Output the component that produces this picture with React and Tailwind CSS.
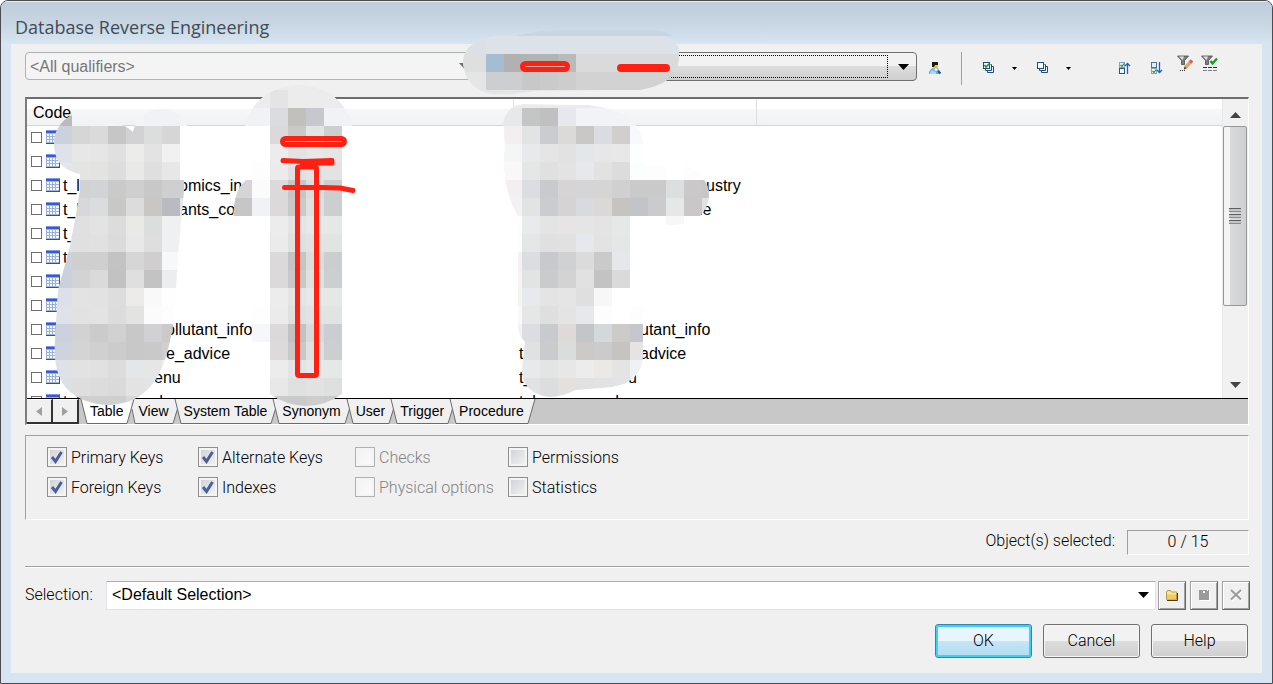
import { useState } from 'react';

// hidden part of each name keeps its width so the visible ends stay in place
const rows = [
  { id: 1 },
  { id: 2 },
  { id: 3, code: ['t_l', 'w-[116px]', 'omics_in'], name: ['', 'w-[187px]', 'ustry'] },
  { id: 4, code: ['t_l', 'w-[116px]', 'ants_co'], name: ['', 'w-[180px]', 'le'] },
  { id: 5, code: ['t_', 'w-[116px]', ''] },
  { id: 6, code: ['t', 'w-[116px]', ''] },
  { id: 7 },
  { id: 8 },
  { id: 9, code: ['', 'w-[103px]', 'ollutant_info'], name: ['', 'w-[121px]', 'utant_info'] },
  { id: 10, code: ['', 'w-[103px]', 'e_advice'], name: ['t', 'w-[121px]', 'advice'] },
  { id: 11, code: ['', 'w-[91px]', 'enu'], name: ['t_', 'w-[109px]', 'u'] },
  { id: 12, code: ['t_l', 'w-[91px]', 'd'], name: ['t_l', 'w-[91px]', 'd'] },
];

const tabs = ['Table', 'View', 'System Table', 'Synonym', 'User', 'Trigger', 'Procedure'];

const options = [
  { label: 'Primary Keys', checked: true },
  { label: 'Alternate Keys', checked: true },
  { label: 'Checks', disabled: true },
  { label: 'Permissions' },
  { label: 'Foreign Keys', checked: true },
  { label: 'Indexes', checked: true },
  { label: 'Physical options', disabled: true },
  { label: 'Statistics' },
];

const CELL = 18;

const mosaics = [
  {
    id: 'owner',
    x: 450,
    y: 36,
    fill: '#e4e5e5',
    path: 'M463 64C463 47 476 38 500 36C520 36 530 36 560 36H660Q676 38 679 50V60Q676 84 640 90L535 91Q510 96 490 94Q466 88 463 64Z',
    cells: [
      ['#dbe0e6', '#dbe0e6', ...Array(11).fill('#dde2e9')],
      ['#dfdfdf', '#dfdfdf', '#a6bcd0', '#b2b0b0', '#b0b4b5', '#b0b4b5', '#bababa', ...Array(6).fill('#dadada')],
      ['#e4e5e5', '#e4e5e5', '#cdcecf', '#cdcecf', '#c8c8c8', '#cacaca', '#cdcdcd', ...Array(6).fill('#d2d2d2')],
    ],
  },
  {
    id: 'code',
    x: 54,
    y: 108,
    fill: '#f3f4f6',
    path: 'M72 115C60 121 54 132 54 143C54 160 62 170 80 174L80 190L76 215L69 250L58 290L55 340C53 375 62 400 105 405C150 405 165 375 173 325L176 290L178 255L184 190V180H180V126H187Q180 109 160 109Q138 110 133 132Q125 124 112 123H72Z',
    cells: [
      ['#b9bbc0', '#f0f2f5', '#f2f3f5', '#f4f5f7', '#f4f5f7', '#f1f2f5', '#f1f2f5', '#f3f4f7'],
      ['#cdd1dc', '#d6d6d7', '#dadada', '#c6c6c7', '#d2d2d4', '#dcdddd', '#d6d6d6'],
      ['#dfe2ea', '#e7e7e8', '#e6e6e6', '#e0e0e1', '#ececeb', '#e3e3e3', '#f1f1f2'],
      ['#e2e5ec', '#e4e4e5', '#e3e3e2', '#dddddd', '#e9e9e8', '#dfdfdf', '#e7e7e7'],
      ['#d2d2d3', '#d2d2d3', '#d2d3d4', '#cacaca', '#cfcfcf', '#c8c8c9', '#cfcfcf', '#cfcfcf'],
      ['#d8d7d9', '#d8d7d9', '#dbdcde', '#c8c9c6', '#dcdcdc', '#c9c6c6', '#b9bbc1', '#e6e6e6'],
      ['#e0e0e0', '#e0e0e0', '#e2e3e2', '#dcdcdc', '#e9e9e8', '#dcdddd', '#eff0f0', '#eff0f0'],
      ['#dfe2e9', '#e0e0e0', '#e1e1e1', '#dbdbdc', '#e8e8e8', '#dedede', '#eff0f1', '#eff0f1'],
      ['#cbd1de', '#cfcfd0', '#cfcfd0', '#c3c3c4', '#d6d6d6', '#d0cece', '#f6f8fa'],
      ['#cbd0dd', '#d3d3d4', '#dadada', '#c2c2c3', '#dfdfdf', '#c3c3c3', '#ecedef'],
      ['#dde0ea', '#e3e3e3', '#e1e2e1', '#dddddd', '#ecebea', '#f9f9f9', '#fefefe'],
      ['#dfe2ea', '#e2e2e2', '#e3e3e4', '#dcdcdc', '#e3e3e2', '#fbfbfb', '#fdfdfd'],
      ['#cdd1dd', '#d2d2d2', '#cbcbcc', '#d1d1d1', '#c8c8c8', '#d1d1d4', '#cbcac9'],
      ['#cfd3de', '#d4d4d5', '#d0d0d1', '#cccccd', '#c8c8c8', '#cac9ca', '#cfcfd0'],
      ['#dee1e8', '#e2e2e3', '#e1e1e1', '#dcdcdd', '#e5e6e7', '#e6e6e6', '#eeeeee'],
      ['#dcdfe6', '#dededf', '#dcdcdc', '#dadada', '#e3e3e4', '#e3e4e4', '#eeeeee'],
      ['#cfcfd0', '#cfcfd0', '#cfcfd0', '#cfcfd0', '#d8d8d8', '#d8d8d8', '#d8d8d8'],
    ],
  },
  {
    id: 'kind',
    x: 234,
    y: 90,
    fill: '#ececec',
    path: 'M245 126Q254 92 290 86Q305 82 322 90Q346 100 352 126H342V394Q325 406 306 406Q285 405 270 394V342H252V216H233Q234 190 246 180H252V150H270V126Z',
    cells: [
      ['#ececec', '#ececec', '#e4e4e4', '#ececec', '#ececec', '#ececec', '#ececec'],
      ['#f0f2f5', '#f0f2f5', '#dadce0', '#c2c0bd', '#c6c8ce', '#f0f2f5', '#f0f2f5'],
      ['#ffffff', '#ffffff', '#dcd9da', '#c9c9c7', '#e2e5e4', '#cdcecf'],
      ['#ffffff', '#ffffff', '#ececec', '#e3e3e3', '#e6e7e6', '#e4e5e5'],
      ['#ffffff', '#fdfdfd', '#ebebeb', '#e0e0e0', '#e3e3e5', '#e2e3e2'],
      ['#d5d5d6', '#fbfbfc', '#dcd9da', '#c6c6c4', '#dcdede', '#cdcecf'],
      ['#c6c6c6', '#f0f2f5', '#dcd9da', '#c9c9c8', '#e0e2e1', '#cdcecf'],
      ['#ffffff', '#ffffff', '#ececec', '#e4e4e4', '#e7e9e8', '#e6e8e7'],
      ['#ffffff', '#ffffff', '#ebebeb', '#dfe0e0', '#e2e4e3', '#e2e4e3'],
      ['#ffffff', '#ffffff', '#dcd9da', '#c4c5c2', '#dcdddd', '#cccdcf'],
      ['#ffffff', '#ffffff', '#dcd9da', '#c8c8c7', '#e0e2e1', '#cdcecf'],
      ['#ffffff', '#ffffff', '#ececec', '#e4e4e4', '#e7e9e8', '#e6e8e7'],
      ['#ffffff', '#fefefe', '#ebebeb', '#dfe0e0', '#e2e4e3', '#e2e4e3'],
      ['#ffffff', '#f6f7fa', '#dcd9da', '#c2c2c0', '#d9dadb', '#cccdd0'],
      ['#ffffff', '#ffffff', '#dcdada', '#c8c8c7', '#e0e2e1', '#cdcecf'],
      ['#ffffff', '#ffffff', '#ececec', '#e4e4e4', '#e7e9e8', '#e6e8e7'],
      ['#ffffff', '#ffffff', '#e8e8e8', '#dfe0e0', '#e2e2e2', '#dedfdf'],
      ['#cbcbcb', '#cbcbcb', '#cbcbcb', '#cacaca', '#cdcdcd', '#cbcbcb'],
    ],
  },
  {
    id: 'name',
    x: 504,
    y: 108,
    fill: '#ebebec',
    path: 'M502 125Q508 104 524 104L590 105Q640 112 643 144V166H685Q709 176 709 195Q709 206 700 216H684V224L666 225V216H630V288L643 310V355Q642 382 612 387L575 390Q562 397 550 397Q523 394 522 370L525 342Q518 335 518 325V216Q503 190 504 156L505 150L504 126Z',
    cells: [
      ['#e7e8ea', '#c4c5c5', '#c0c0c1', '#e7e8ed', '#f1f3f6', '#f1f3f6', '#f1f3f6', '#f1f3f6'],
      ['#f2eff0', '#e1e4e3', '#cacccf', '#dcdad9', '#cac8c6', '#dadce1', '#d0cfce', '#f7f9fc'],
      ['#f4f5f5', '#e7e9eb', '#e5e5e5', '#e2e2e2', '#e4e7ea', '#e7e7e7', '#e8e8e8', '#fdfefe'],
      ['#f9f7f8', '#e5e7e6', '#e0e0e0', '#e3e3e3', '#e6e8ec', '#e2e2e3', '#dcdcdc', '#fcfdfd', '#fdfdfd', '#ffffff', '#fdfdfd', '#fdfdfd'],
      ['#f2eff1', '#dcdde0', '#c8cacd', '#d6d4d5', '#d5d5d7', '#d5d5d5', '#d0d0d0', '#cacaca', '#cacacb', '#dddee0', '#cac8c9', '#c8c6c7'],
      ['#f3f1f2', '#e1e4e3', '#cacccf', '#d6d3d5', '#d8dadd', '#dad9d7', '#c5c4c1', '#c3c4c7', '#cbcbcd', '#e5e8e7', '#cac7c8', '#e0e1e1'],
      ['#fdfdfd', '#e8eaec', '#e4e4e4', '#e6e4e5', '#e5e5e5', '#e4e4e4', '#e6e7e7', '#ffffff', '#ffffff', '#f7f7f7'],
      ['#fdfdfd', '#e5e7e6', '#e0e0e0', '#e1e1e1', '#e6e8eb', '#e3e3e3', '#e5e7e7'],
      ['#f4f1f3', '#dcdde0', '#c8c9cc', '#d0d1d3', '#dbdbdb', '#cacaca', '#e5e7ea'],
      ['#f6f3f4', '#e1e4e3', '#cacbcd', '#d3d3d4', '#e1e1e1', '#c3c3c3', '#dadada'],
      ['#f3f4f4', '#e7e9ec', '#e4e4e4', '#e5e5e5', '#dfdfdf', '#f7f7f7', '#ffffff', '#ffffff'],
      ['#fbf8f9', '#e5e7e6', '#dfdfdf', '#e4e4e4', '#e6e8ec', '#fdfdfd', '#ffffff', '#fdfdfd'],
      ['#f4f2f4', '#dcdde0', '#c8cacd', '#dedad9', '#c4c5c8', '#d5d8db', '#cccbc9', '#c6c7cc'],
      ['#f4f4f4', '#e0e2e1', '#cacbcd', '#dbdcdc', '#cccac8', '#cbcbcb', '#c5c4c2', '#e5e4e3'],
      ['#f4f4f4', '#e7e9eb', '#e3e4e4', '#e7e7e7', '#ececec', '#ebe9e6', '#e4e4e5', '#eff1f4'],
      ['#f4f4f4', '#e1e2e2', '#dcddde', '#e3e1df', '#e1e1e1', '#e0e2e4', '#e3e3e3', '#e9e9e9'],
      ['#dcdcdc', '#dcdcdc', '#dcdcdc', '#dcdcdc', '#dcdcdc'],
    ],
  },
];

const Redaction = () => (
  <svg width="1273" height="684" viewBox="0 0 1273 684" className="pointer-events-none absolute -top-px -left-px" aria-hidden="true">
    {mosaics.map((m) => (
      <g key={m.id}>
        <clipPath id={`clip-${m.id}`}>
          <path d={m.path} />
        </clipPath>
        <g clipPath={`url(#clip-${m.id})`}>
          <path d={m.path} fill={m.fill} />
          {m.cells.map((line, r) =>
            line.map((color, c) => (
              <rect
                key={`${r}-${c}`}
                x={m.x + c * CELL}
                y={m.y + r * CELL}
                width={CELL}
                height={CELL}
                fill={color}
                shapeRendering="crispEdges"
              />
            ))
          )}
        </g>
      </g>
    ))}
    <path d="M515 36Q535 31 560 30H655Q667 31 672 36Z" fill="#c8d5e3" />
    <g fill="none" stroke="#ff2012" strokeLinecap="round" strokeLinejoin="round">
      <rect x="522.5" y="63.5" width="45" height="6" rx="3" strokeWidth="5" />
      <path d="M621 68H666" strokeWidth="8" />
      <rect x="282.5" y="138.5" width="62" height="6" rx="3" strokeWidth="5" />
      <path d="M283 160.500L303 161.500L332 160.500" strokeWidth="5" />
      <path d="M302 163L332 163" strokeWidth="5" />
      <rect x="297.500" y="167" width="19" height="208.500" rx="1.500" strokeWidth="5" />
      <path d="M284.500 187.500H322L340 188L353 190.500" strokeWidth="5" />
    </g>
  </svg>
);

const Caret = ({ className }) => (
  <svg width="11" height="6" viewBox="0 0 11 6" className={className} aria-hidden="true">
    <path d="M0 0H11L5.500 6Z" fill="currentColor" />
  </svg>
);

const SmallCaret = () => (
  <svg width="5" height="3" viewBox="0 0 5 3" aria-hidden="true">
    <path d="M0 0H5L2.500 3Z" fill="#000" />
  </svg>
);

const UserIcon = () => (
  <svg width="14" height="14" viewBox="0 0 14 14" aria-hidden="true">
    <path d="M1 13V11L3 8L5 7H9L12 10V13Z" fill="#5eb4ea" />
    <path d="M2 12L4 9L8 11V13H2Z" fill="#a5dcf8" />
    <path d="M5 2H10V6L8 8H6L5 6Z" fill="#f6c52e" />
    <path d="M4 6V1H10V4H7L6 6Z" fill="#20160c" />
    <circle cx="8" cy="8.5" r="2" fill="#dceefa" stroke="#9aa9b6" />
    <path d="M10 10L12.500 12.500" stroke="#1c527c" strokeWidth="2" />
  </svg>
);

const StackIcon = ({ checked }) => (
  <svg width="12" height="12" viewBox="0 0 12 12" fill="none" stroke="#1f4e7c" strokeWidth="1" aria-hidden="true">
    <path d="M8.500 4.500H10.500V10.500H4.500V8.500" />
    <path d="M7.500 2.500H8.500V8.500H2.500V6.500" />
    <rect x="0.5" y="0.5" width="6" height="6" fill="#f7fafc" />
    {checked && <path d="M1.500 3L3 5L6.500 1.500" stroke="#159a25" strokeWidth="1.600" />}
  </svg>
);

const MoveIcon = ({ down }) => (
  <svg width="12" height="12" viewBox="0 0 12 12" fill="none" aria-hidden="true">
    <rect x="0.5" y="0.5" width="5" height="5" fill="#e3eef8" stroke={down ? '#4e7198' : '#8ea2b6'} />
    <rect x="0.5" y="6.5" width="5" height="5" fill="#f2f7fb" stroke={down ? '#8ea2b6' : '#285580'} />
    <path d={down ? 'M1.500 9L3 10.500L5 7.500' : 'M1.500 3L3 4.500L5 1.500'} stroke="#22a02a" strokeWidth="1.200" />
    <path d={down ? 'M8.500 0V10M6 8L8.500 10.500L11 8' : 'M8.500 12V2M6 4L8.500 1.500L11 4'} stroke="#1264e0" strokeWidth="1.300" />
  </svg>
);

const FilterIcon = ({ checked }) => (
  <svg width="17" height="17" viewBox="0 0 17 17" fill="none" aria-hidden="true">
    <path d="M0.500 1H11.500L7.500 5.500V9.500H4.500V5.500Z" fill="#7d7d7d" stroke="#4c4c4c" strokeWidth="0.800" />
    <path d="M2 1.500H7L5.500 5Z" fill="#e4e4e4" />
    {checked ? (
      <>
        <path d="M9.500 6L11.500 8.500L16 3.500" stroke="#12a11c" strokeWidth="2.400" />
        <path d="M2 12.500H16" stroke="#1d2f78" strokeWidth="1" strokeDasharray="4 1" />
        <path d="M2 15.500H16" stroke="#808080" strokeWidth="1" strokeDasharray="4 1" />
      </>
    ) : (
      <>
        <path d="M8.500 12.500L13.500 7" stroke="#d9a96a" strokeWidth="3.400" />
        <path d="M6.800 14.500L7.500 11.500L9.800 13.500Z" fill="#4a3520" />
        <path d="M13 7.500L15 5.300" stroke="#d8605a" strokeWidth="3.400" />
        <path d="M3 15.500H8" stroke="#333" strokeDasharray="1 1" />
      </>
    )}
  </svg>
);

const TableIcon = () => (
  <svg width="14" height="14" viewBox="0 0 14 14" shapeRendering="crispEdges" className="mb-[2px] shrink-0" aria-hidden="true">
    <rect width="14" height="14" fill="#9db2d6" />
    <rect width="14" height="3" fill="#3a5bd0" />
    <rect width="14" height="1" fill="#7f97e8" />
    <rect x="13" y="3" width="1" height="11" fill="#3b5480" />
    <rect y="13" width="14" height="1" fill="#3b5480" />
    {[1, 4, 7, 10].map((x) => [4, 7, 10].map((y) => <rect key={`${x}-${y}`} x={x} y={y} width={x === 10 ? 3 : 2} height="2" fill="#f2f7ff" />))}
  </svg>
);

const FolderIcon = () => (
  <svg width="12" height="11" viewBox="0 0 12 11" aria-hidden="true">
    <path d="M0.500 9.500V2L1.500 0.500H4.500L5.500 2H10.500V9.500Z" fill="#f8e49a" stroke="#b59a4c" />
    <path d="M1 9.500V4.500H10V9.500Z" fill="#f3cc5c" />
    <path d="M1 10.500H11.500V3" stroke="#4b3c14" fill="none" />
  </svg>
);

const SaveIcon = () => (
  <svg width="11" height="11" viewBox="0 0 11 11" shapeRendering="crispEdges" aria-hidden="true">
    <path d="M1 1H11V11H1Z" fill="#fff" />
    <path d="M0 0H10V10H0Z" fill="#9b9b9b" />
    <path d="M4 1H6V3H4Z" fill="#fff" />
    <path d="M8 0H9V1H8Z" fill="#fff" />
  </svg>
);

const CloseIcon = () => (
  <svg width="13" height="12" viewBox="0 0 13 12" fill="none" aria-hidden="true">
    <path d="M2 2L12 11.500M12 2L2 11.500" stroke="#fff" strokeWidth="1.600" />
    <path d="M1 1L11 10.500M11 1L1 10.500" stroke="#9b9b9b" strokeWidth="1.900" />
  </svg>
);

const ToolButton = ({ label, className, children }) => (
  <button type="button" aria-label={label} className={`flex h-8 items-center justify-center ${className}`}>
    {children}
  </button>
);

const NameParts = ({ parts }) => {
  if (!parts) return null;
  const [start, width, end] = parts;
  return (
    <span className="flex whitespace-pre">
      <span className={`shrink-0 ${width}`}>{start}</span>
      <span>{end}</span>
    </span>
  );
};

const OptionBox = ({ option, onToggle }) => (
  <label className={`flex h-5 items-center gap-1 ${option.disabled ? 'text-[#838383]' : 'text-black'}`}>
    <span className="grid">
      <input
        type="checkbox"
        checked={!!option.checked}
        disabled={option.disabled}
        onChange={onToggle}
        className="peer col-start-1 row-start-1 size-5 appearance-none border border-[#8e8f8f] bg-linear-to-br from-[#cbcfd5] to-[#f6f6f6] shadow-[inset_0_0_0_2px_#f4f4f4] disabled:border-[#b1b1b1] disabled:from-[#f2f2f2] disabled:to-[#fbfbfb]"
      />
      <svg viewBox="0 0 20 20" className="invisible col-start-1 row-start-1 size-5 peer-checked:visible" aria-hidden="true">
        <path d="M5 10L8.500 14.500L14.500 5" fill="none" stroke="#4a5f97" strokeWidth="3" />
      </svg>
    </span>
    <span className="pt-[2px]">{option.label}</span>
  </label>
);

const TabEdge = ({ left, right }) => (
  <svg width="15" height="25" viewBox="0 0 15 25" className="shrink-0" aria-hidden="true">
    {left && <path d={right ? 'M0 0H9L8 11L4 25H0Z' : 'M0 0H11L4 25H0Z'} fill={left} />}
    {right && <path d={left ? 'M6 0H15V25H12L8.500 11Z' : 'M6 0H15V25H12Z'} fill={right} />}
    {left && <path d={right && left !== '#ffffff' ? 'M8.500 10L4 24.500H0' : 'M11 0L4 24.500H0'} fill="none" stroke="#6b6b6b" />}
    {right && <path d={left === '#ffffff' ? 'M9 10L12 24.500H15' : 'M6 0L12 24.500H15'} fill="none" stroke="#6b6b6b" />}
  </svg>
);

const tabFill = (index, active) => {
  if (index < 0 || index >= tabs.length) return null;
  return index === active ? '#ffffff' : '#f0f0f0';
};

const App = () => {
  const [activeTab, setActiveTab] = useState(0);
  const [opts, setOpts] = useState(options);
  const [selected, setSelected] = useState([]);

  const toggleOption = (label) => {
    setOpts(prev => prev.map(o => (o.label === label ? { ...o, checked: !o.checked } : o)));
  };

  const toggleRow = (id) => {
    setSelected(prev => (prev.includes(id) ? prev.filter(x => x !== id) : [...prev, id]));
  };

  return (
    <div className="relative overflow-hidden rounded-t-lg border border-[#4c4b50] bg-[#d7e4f2] px-[10px] pb-[10px] font-['Liberation_Sans',sans-serif] text-base leading-5 text-black">
      <header className="-mx-[10px] flex h-[43px] items-center border-t border-[#e6edf4] bg-linear-to-b from-[#bfcddc] via-[#c8d5e2] to-[#d7e4f2] px-[14px] pt-2">
        <h1 className="font-['Open_Sans',sans-serif] text-lg text-[#414c55]">Database Reverse Engineering</h1>
      </header>

      <main className="bg-[#f0f0f0] pt-2 pr-[13px] pb-[15px] pl-[14px]">
        <div className="flex h-[33px] items-start">
          <div className="grid w-[446px]">
            <select
              disabled
              aria-label="Qualifier"
              className="col-start-1 row-start-1 h-7 appearance-none rounded-sm border border-[#adb2b5] bg-[#f4f4f4] px-1 pt-px text-[#777] opacity-100"
            >
              <option>&lt;All qualifiers&gt;</option>
            </select>
            <Caret className="pointer-events-none col-start-1 row-start-1 mr-px self-center justify-self-end text-[#6d6d6d]" />
          </div>
          <div className="ml-[5px] grid flex-1">
            <select
              aria-label="Owner"
              className="col-start-1 row-start-1 h-[29px] appearance-none rounded-sm border border-[#707070] bg-linear-to-b from-[#f2f2f2] from-50% via-[#dddddd] via-50% to-[#cfcfcf] px-2"
            />
            <span className="pointer-events-none col-start-1 row-start-1 m-[3px] mr-[29px] border border-dotted border-black" />
            <Caret className="pointer-events-none col-start-1 row-start-1 mr-2 self-center justify-self-end" />
          </div>
          <ToolButton label="Connect as user" className="w-9">
            <UserIcon />
          </ToolButton>
          <div className="ml-2 h-[33px] w-px bg-[#a0a0a0]" />
          <ToolButton label="Select all" className="ml-[9px] w-9">
            <StackIcon checked />
          </ToolButton>
          <ToolButton label="Select all menu" className="w-[14px]">
            <SmallCaret />
          </ToolButton>
          <ToolButton label="Deselect all" className="ml-1 w-9">
            <StackIcon />
          </ToolButton>
          <ToolButton label="Deselect all menu" className="w-[14px]">
            <SmallCaret />
          </ToolButton>
          <ToolButton label="Move selected up" className="ml-[34px] w-8">
            <MoveIcon />
          </ToolButton>
          <ToolButton label="Move selected down" className="w-8">
            <MoveIcon down />
          </ToolButton>
          <ToolButton label="Edit filter" className="w-6 pb-[10px]">
            <FilterIcon />
          </ToolButton>
          <ToolButton label="Apply filter" className="mr-7 w-6 pb-[10px]">
            <FilterIcon checked />
          </ToolButton>
        </div>

        <section className="mt-3 border-t-2 border-r border-b border-l-2 border-t-[#6d6d6d] border-r-white border-b-white border-l-[#7c7c7c] bg-[#c8c8c8]">
          <div className="flex h-[299px] overflow-hidden bg-white">
            <div className="min-w-0 flex-1 overflow-hidden">
              <table className="w-full table-fixed border-collapse text-left">
                <thead>
                  <tr className="h-[26px] bg-linear-to-b from-white from-40% via-[#f6f7f9] via-40% to-[#f1f2f4]">
                    <th className="w-[486px] border-r border-b border-r-[#e6e7e9] border-b-[#d5d5d5] px-[6px] pt-[2px] font-normal">Code</th>
                    <th className="w-[243px] border-r border-b border-r-[#dedfe1] border-b-[#d5d5d5]" />
                    <th className="border-b border-b-[#d5d5d5]" />
                  </tr>
                </thead>
                <tbody>
                  {rows.map((row) => (
                    <tr key={row.id} className="h-6">
                      <td className="p-0">
                        <div className="flex h-6 items-center pl-1">
                          <input
                            type="checkbox"
                            aria-label={`Row ${row.id}`}
                            checked={selected.includes(row.id)}
                            onChange={() => toggleRow(row.id)}
                            className="mr-1 size-[11px] shrink-0 appearance-none border border-[#707070] bg-white checked:bg-[#4a5f97]"
                          />
                          <TableIcon />
                          <div className="ml-[3px]">
                            <NameParts parts={row.code} />
                          </div>
                        </div>
                      </td>
                      <td className="p-0 pl-[6px]">
                        <NameParts parts={row.name} />
                      </td>
                      <td />
                    </tr>
                  ))}
                </tbody>
              </table>
            </div>
            <div className="flex w-[26px] flex-col items-start border-l border-[#e8e8e8] bg-[#f1f1f1]">
              <div className="flex h-[27px] w-6 items-center justify-center pt-1">
                <Caret className="rotate-180 text-[#444]" />
              </div>
              <div className="flex h-[180px] w-6 flex-col items-center justify-center gap-[2px] rounded-xs border border-[#979797] bg-linear-to-r from-[#f3f3f3] from-25% via-[#d9dadc] via-25% to-[#cfd0d3]">
                {[0, 1, 2].map((n) => (
                  <div key={n} className="h-[4px] w-3 border-t border-b border-t-[#5f5f5f] border-b-[#8a8a8a] bg-[#c4c4c4]" />
                ))}
              </div>
              <div className="mt-auto flex h-[26px] w-6 items-center justify-center">
                <Caret className="text-[#444]" />
              </div>
            </div>
          </div>

          <div className="flex h-[26px] border-t border-black">
            <button type="button" aria-label="Scroll tabs left" className="flex w-[26px] items-center justify-center border-t border-r-2 border-b-2 border-t-white border-r-[#333] border-b-[#333] bg-[#f0f0f0]">
              <svg width="6" height="9" viewBox="0 0 6 9"><path d="M6 0V9L0 4.500Z" fill="#a0a0a0" /></svg>
            </button>
            <button type="button" aria-label="Scroll tabs right" className="flex w-[26px] items-center justify-center border-t border-r-2 border-b-2 border-t-white border-r-[#333] border-b-[#333] bg-[#f0f0f0]">
              <svg width="6" height="9" viewBox="0 0 6 9"><path d="M0 0V9L6 4.500Z" fill="#a0a0a0" /></svg>
            </button>
            <div className="-ml-1 flex text-sm" role="tablist">
              <TabEdge right={tabFill(0, activeTab)} />
              {tabs.map((tab, i) => (
                <div key={tab} className="flex">
                  <button
                    type="button"
                    role="tab"
                    aria-selected={i === activeTab}
                    onClick={() => setActiveTab(i)}
                    className={`border-b border-[#6b6b6b] whitespace-nowrap ${i === activeTab ? 'bg-white' : 'bg-[#f0f0f0]'}`}
                  >
                    {tab}
                  </button>
                  <TabEdge left={tabFill(i, activeTab)} right={tabFill(i + 1, activeTab)} />
                </div>
              ))}
            </div>
          </div>
        </section>

        <fieldset className="mt-[10px] grid h-[85px] grid-cols-[151px_157px_153px_1fr] content-start gap-y-[10px] border border-t-[#a0a0a0] border-r-white border-b-white border-l-[#a0a0a0] pt-[11px] pl-[21px] font-['Roboto',sans-serif] font-light">
          {opts.map((option) => (
            <OptionBox key={option.label} option={option} onToggle={() => toggleOption(option.label)} />
          ))}
        </fieldset>

        <div className="mt-[10px] flex h-[25px] justify-end font-['Roboto',sans-serif] font-light">
          <label htmlFor="count" className="mr-3 pt-px">Object(s) selected:</label>
          <output id="count" className="w-[122px] border border-t-[#a0a0a0] border-r-white border-b-white border-l-[#a0a0a0] text-center leading-[22px]">
            {selected.length} / 15
          </output>
        </div>

        <hr className="mt-[11px] border-t border-b border-t-[#a0a0a0] border-b-white" />

        <div className="-mr-px mt-3 flex h-[30px] items-center">
          <label htmlFor="selection" className="w-[81px] font-['Roboto',sans-serif] font-light">Selection:</label>
          <div className="grid flex-1">
            <select id="selection" className="col-start-1 row-start-1 h-[29px] appearance-none border border-t-[#abadb3] border-r-[#e2e3ea] border-b-[#e2e3ea] border-l-[#e2e3ea] bg-white px-[5px]">
              <option>&lt;Default Selection&gt;</option>
            </select>
            <Caret className="pointer-events-none col-start-1 row-start-1 mr-[7px] self-center justify-self-end" />
          </div>
          <div className="ml-[2px] flex gap-1">
            {[
              { label: 'Open selection', icon: <FolderIcon /> },
              { label: 'Save selection', icon: <SaveIcon />, disabled: true },
              { label: 'Delete selection', icon: <CloseIcon />, disabled: true },
            ].map((b) => (
              <button
                key={b.label}
                type="button"
                aria-label={b.label}
                disabled={b.disabled}
                className="flex h-[29px] w-7 items-center justify-center border border-t-[#a0a0a0] border-r-[#696969] border-b-[#696969] border-l-[#a0a0a0] bg-[#f0f0f0] shadow-[inset_1px_1px_0_#fff,inset_-1px_-1px_0_#a0a0a0]"
              >
                {b.icon}
              </button>
            ))}
          </div>
        </div>

        <div className="mt-[14px] mr-px flex justify-end gap-[11px] font-['Roboto',sans-serif] font-light">
          <button type="button" className="h-[34px] w-[97px] rounded-[3px] border border-[#3c7fb1] bg-linear-to-b from-[#e8f5fc] from-50% via-[#c4e5f6] via-50% to-[#b2dcf2] shadow-[inset_0_0_0_2px_#3bd0f8]">
            OK
          </button>
          {['Cancel', 'Help'].map((label) => (
            <button
              key={label}
              type="button"
              className="h-[34px] w-[97px] rounded-[3px] border border-[#707070] bg-linear-to-b from-[#f2f2f2] from-50% via-[#dddddd] via-50% to-[#cfcfcf] shadow-[inset_0_0_0_1px_#f6f6f6]"
            >
              {label}
            </button>
          ))}
        </div>
      </main>

      <Redaction />
    </div>
  );
};

export default App;
